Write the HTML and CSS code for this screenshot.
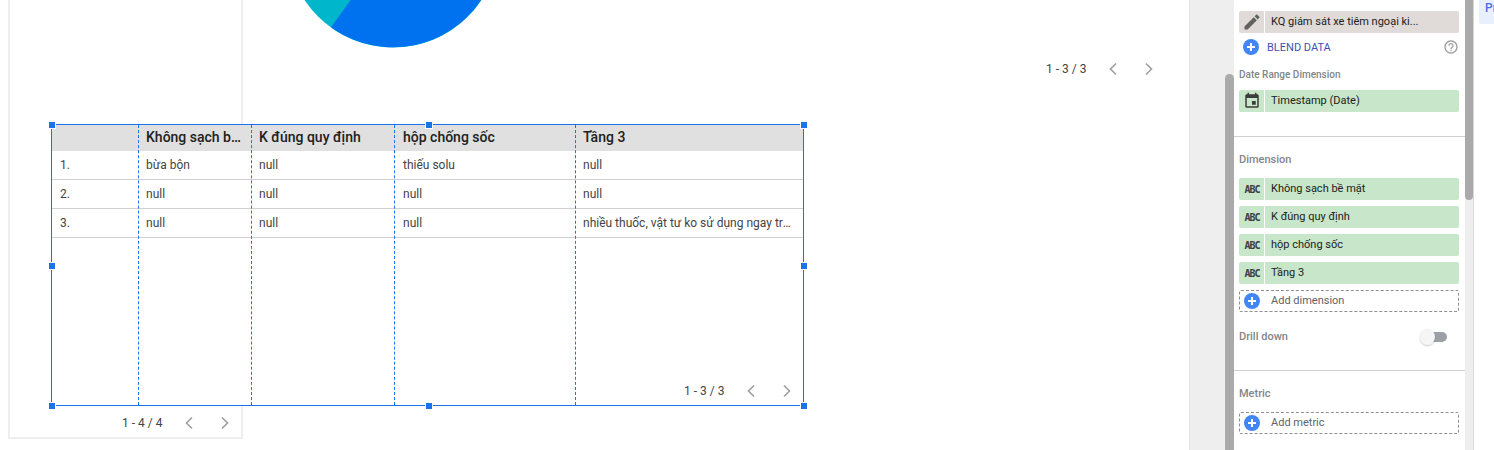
FILE: index.html
```html
<!DOCTYPE html>
<html lang="vi">
<head>
  <meta charset="UTF-8" />
  <title>Report editor</title>
  <link rel="stylesheet" href="styles.css">
</head>
<body>
  <div class="page">
    <main class="canvas">
      <div class="card"></div>

      <svg class="pie" width="212" height="48" viewBox="0 0 212 48">
        <circle class="pie-teal" cx="106" cy="-58.5" r="106" />
        <path class="pie-blue" d="M106 -58.5L44 27.2A106 106 0 0 0 212 -58.5Z" />
      </svg>

      <div class="pager pager-top">
        <span>1 - 3 / 3</span>
        <svg class="chev" viewBox="0 0 12 14"><path d="M9 1.5L3.5 7L9 12.5" /></svg>
        <svg class="chev" viewBox="0 0 12 14"><path d="M3 1.5L8.5 7L3 12.5" /></svg>
      </div>

      <div class="pager pager-card">
        <span>1 - 4 / 4</span>
        <svg class="chev" viewBox="0 0 12 14"><path d="M9 1.5L3.5 7L9 12.5" /></svg>
        <svg class="chev" viewBox="0 0 12 14"><path d="M3 1.5L8.5 7L3 12.5" /></svg>
      </div>

      <section class="chart">
        <table class="data">
          <colgroup>
            <col class="c0"><col class="c1"><col class="c2"><col class="c3"><col class="c4">
          </colgroup>
          <thead>
            <tr><th></th><th>Không sạch bề mặt</th><th>K đúng quy định</th><th>hộp chống sốc</th><th>Tầng 3</th></tr>
          </thead>
          <tbody>
            <tr class="row-first"><td>1.</td><td>bừa bộn</td><td>null</td><td>thiếu solu</td><td>null</td></tr>
            <tr><td>2.</td><td>null</td><td>null</td><td>null</td><td>null</td></tr>
            <tr><td>3.</td><td>null</td><td>null</td><td>null</td><td>nhiều thuốc, vật tư ko sử dụng ngay trong ca</td></tr>
          </tbody>
        </table>

        <i class="guide g1"></i><i class="guide g2"></i><i class="guide g3"></i><i class="guide g4"></i>

        <div class="pager pager-table">
          <span>1 - 3 / 3</span>
          <svg class="chev" viewBox="0 0 12 14"><path d="M9 1.5L3.5 7L9 12.5" /></svg>
          <svg class="chev" viewBox="0 0 12 14"><path d="M3 1.5L8.5 7L3 12.5" /></svg>
        </div>

        <i class="handle h-tl"></i><i class="handle h-tm"></i><i class="handle h-tr"></i>
        <i class="handle h-ml"></i><i class="handle h-mr"></i>
        <i class="handle h-bl"></i><i class="handle h-bm"></i><i class="handle h-br"></i>
      </section>
    </main>

    <div class="gutter"><div class="gutter-thumb"></div></div>

    <aside class="panel">
      <div class="chip chip-source">
        <span class="chip-icon">
          <svg width="20" height="20" viewBox="0 0 24 24"><path d="M3 17.25V21h3.75L17.81 9.94l-3.75-3.75L3 17.25zM20.71 7.04c.39-.39.39-1.02 0-1.41l-2.34-2.34c-.39-.39-1.02-.39-1.41 0l-1.83 1.83 3.75 3.75 1.83-1.83z" /></svg>
        </span>
        <span class="chip-text">KQ giám sát xe tiêm ngoại ki...</span>
      </div>

      <div class="blend">
        <span class="plus plus-big"></span>
        <span class="blend-text">BLEND DATA</span>
        <svg class="help" width="16" height="16" viewBox="0 0 24 24"><path d="M11 18h2v-2h-2v2zm1-16C6.48 2 2 6.48 2 12s4.48 10 10 10 10-4.48 10-10S17.52 2 12 2zm0 18c-4.41 0-8-3.59-8-8s3.59-8 8-8 8 3.59 8 8-3.59 8-8 8zm0-14c-2.21 0-4 1.79-4 4h2c0-1.1.9-2 2-2s2 .9 2 2c0 2-3 1.75-3 5h2c0-2.25 3-2.5 3-5 0-2.21-1.79-4-4-4z" /></svg>
      </div>

      <div class="label label-small">Date Range Dimension</div>
      <div class="chip">
        <span class="chip-icon">
          <svg width="18" height="18" viewBox="0 0 24 24"><path d="M17 12h-5v5h5v-5zM16 1v2H8V1H6v2H5c-1.11 0-1.99.9-1.99 2L3 19c0 1.1.89 2 2 2h14c1.1 0 2-.9 2-2V5c0-1.1-.9-2-2-2h-1V1h-2zm3 18H5V8h14v11z" /></svg>
        </span>
        <span class="chip-text">Timestamp (Date)</span>
      </div>

      <hr class="divider divider-1">

      <div class="label label-dim">Dimension</div>
      <div class="chip-list">
        <div class="chip"><span class="chip-icon abc">ABC</span><span class="chip-text">Không sạch bề mặt</span></div>
        <div class="chip"><span class="chip-icon abc">ABC</span><span class="chip-text">K đúng quy định</span></div>
        <div class="chip"><span class="chip-icon abc">ABC</span><span class="chip-text">hộp chống sốc</span></div>
        <div class="chip"><span class="chip-icon abc">ABC</span><span class="chip-text">Tầng 3</span></div>
        <div class="add"><span class="plus"></span><span>Add dimension</span></div>
      </div>

      <div class="drill">
        <span class="label">Drill down</span>
        <span class="switch"><span class="switch-knob"></span></span>
      </div>

      <hr class="divider divider-2">

      <div class="label label-metric">Metric</div>
      <div class="add"><span class="plus"></span><span>Add metric</span></div>
    </aside>

    <div class="panel-scroll"><div class="panel-thumb"></div></div>

    <div class="next-panel">
      <div class="tab">Pr</div>
    </div>
  </div>
</body>
</html>
```

FILE: styles.css
```css
* { box-sizing: border-box; margin: 0; padding: 0; }

body {
  font-family: Roboto, sans-serif;
  color: #444;
  background: #fff;
  overflow: hidden;
}

.page {
  display: flex;
  width: 1494px;
  height: 450px;
  overflow: hidden;
}

/* canvas, the charts sit on it freely */
.canvas {
  position: relative;
  width: 1189px;
  flex: none;
}

.card {
  position: absolute;
  left: 8px;
  top: -20px;
  width: 235px;
  height: 459px;
  border: 2px solid #eeeeee;
}

.pie {
  position: absolute;
  left: 287px;
  top: 0;
}

.pie-teal { fill: #00b6cb; }
.pie-blue { fill: #0072f0; }

.pager {
  position: absolute;
  display: flex;
  align-items: center;
  font-size: 12px;
  color: #444;
  white-space: nowrap;
}

.pager span { width: 40px; margin-right: 21px; }
.pager .chev + .chev { margin-left: 24px; }

.chev { width: 12px; height: 14px; }
.chev path {
  fill: none;
  stroke: #9e9e9e;
  stroke-width: 1.6;
}

.pager-top { left: 1046px; top: 62px; }
.pager-card { left: 122px; top: 416px; }
.pager-table { left: 632px; top: 259px; }

.chart {
  position: absolute;
  left: 51px;
  top: 124px;
  width: 753px;
  height: 282px;
  background: #fff;
  border: 1px solid #1a73e8;
}

.data {
  width: 751px;
  border-collapse: collapse;
  table-layout: fixed;
  font-size: 12px;
}

.c0 { width: 87px; }
.c1 { width: 113px; }
.c2 { width: 143px; }
.c3 { width: 181px; }
.c4 { width: 227px; }

.data th, .data td {
  overflow: hidden;
  white-space: nowrap;
  text-overflow: ellipsis;
  text-align: left;
  padding: 0 8px 0 7px;
}

.data td:first-child, .data td:nth-child(4), .data th:nth-child(4) { padding-left: 8px; }

.data th {
  height: 26px;
  padding-bottom: 2px;
  background: #e0e0e0;
  font-size: 14px;
  font-weight: 500;
  color: #212121;
}

.data td {
  height: 29px;
  color: #444;
  border-bottom: 1px solid #d0d0d0;
}

.data .row-first td { height: 28px; }

.guide {
  position: absolute;
  top: 0;
  bottom: 0;
  border-left: 1px dashed #1a73e8;
}

.g1 { left: 86px; }
.g2 { left: 199px; }
.g3 { left: 342px; }
.g4 { left: 523px; }

.handle {
  position: absolute;
  width: 6px;
  height: 6px;
  background: #1a73e8;
  box-shadow: 0 0 0 1px #fff;
}

.h-tl { left: -3px; top: -3px; }
.h-tm { left: 374px; top: -3px; }
.h-tr { right: -4px; top: -3px; }
.h-ml { left: -3px; top: 138px; }
.h-mr { right: -4px; top: 138px; }
.h-bl { left: -3px; bottom: -4px; }
.h-bm { left: 374px; bottom: -4px; }
.h-br { right: -4px; bottom: -4px; }

/* grey strip with the panel scrollbar */
.gutter {
  width: 45px;
  flex: none;
  background: #eeeeee;
  border-left: 1px solid #e2e2e2;
  display: flex;
  justify-content: flex-end;
}

.gutter-thumb {
  width: 9px;
  margin-top: 74px;
  height: 400px;
  background: #aaaaaa;
  border-radius: 5px 5px 0 0;
}

.panel {
  width: 231px;
  flex: none;
  background: #fff;
  padding: 11px 6px 0 5px;
}

.chip {
  display: flex;
  height: 22px;
  background: #c8e6c9;
  border-radius: 2px;
  font-size: 11px;
  color: #212121;
  overflow: hidden;
}

.chip-source { background: #e0dbd8; }

.chip-icon {
  width: 26px;
  flex: none;
  display: flex;
  align-items: center;
  justify-content: center;
  padding-left: 1px;
  border-right: 1px solid #fff;
}

.chip-icon svg { fill: #3c3c3c; }
.chip-source .chip-icon svg { fill: #616161; }

.abc {
  font-family: "DejaVu Sans Mono", monospace;
  font-size: 10px;
  font-weight: 700;
  letter-spacing: -1px;
  color: #3c4043;
}

.chip-text {
  padding-left: 6px;
  line-height: 21px;
  white-space: nowrap;
}

.blend {
  display: flex;
  align-items: center;
  height: 28px;
  margin-bottom: 7px;
  font-size: 11px;
  color: #3f51b5;
}

.blend-text { margin-left: 8px; }
.help { margin-left: auto; fill: #9e9e9e; }

.plus {
  position: relative;
  display: block;
  width: 16px;
  height: 16px;
  margin-left: 4px;
  border-radius: 50%;
  background: #4285f4;
  flex: none;
}

.plus::before, .plus::after {
  content: "";
  position: absolute;
  background: #fff;
}

.plus::before { left: 4px; top: 7px; width: 8px; height: 2px; }
.plus::after { left: 7px; top: 4px; width: 2px; height: 8px; }

.label {
  font-size: 11px;
  font-weight: 500;
  color: #80868b;
}

.label-small {
  font-size: 10px;
  line-height: 14px;
  margin-bottom: 8px;
}

.divider {
  border: none;
  border-top: 1px solid #d0d0d0;
  margin-left: -5px;
  margin-right: -6px;
}

.divider-1 { margin-top: 24px; }
.divider-2 { margin-top: 23px; }

.label-dim { margin-top: 16px; line-height: 14px; margin-bottom: 11px; }
.label-metric { margin-top: 16px; line-height: 14px; margin-bottom: 11px; }

.chip-list {
  display: flex;
  flex-direction: column;
  gap: 6px;
}

.add {
  display: flex;
  align-items: center;
  height: 22px;
  border: 1px dashed #8f8f8f;
  border-radius: 2px;
  font-size: 11px;
  color: #5f6368;
}

.add span:last-child { margin-left: 11px; padding-bottom: 1px; }
.add .plus { margin-left: 4px; }

.drill {
  display: flex;
  align-items: center;
  justify-content: space-between;
  height: 22px;
  margin-top: 13px;
  padding-right: 12px;
}

.switch {
  position: relative;
  display: block;
  width: 24px;
  height: 10px;
  margin-top: 2px;
  background: #9aa0a6;
  border-radius: 5px;
}

.switch-knob {
  position: absolute;
  left: -3px;
  top: -3px;
  width: 15px;
  height: 16px;
  border-radius: 50%;
  background: #f5f5f5;
  box-shadow: 0 1px 2px rgba(0,0,0,0.2);
}

.panel-scroll {
  width: 9px;
  flex: none;
  background: #eeeeee;
  border-right: 1px solid #d8d8d8;
}

.panel-thumb {
  width: 8px;
  height: 200px;
  background: #aaaaaa;
  border-radius: 0 0 4px 4px;
}

.next-panel {
  flex: 1;
  padding-left: 5px;
  background: #fff;
}

.tab {
  width: 16px;
  height: 24px;
  padding: 1px 0 0 6px;
  background: #e8f0fe;
  border-radius: 0 0 0 3px;
  font-size: 12px;
  font-weight: 500;
  color: #4a6ee0;
  overflow: hidden;
}
```
